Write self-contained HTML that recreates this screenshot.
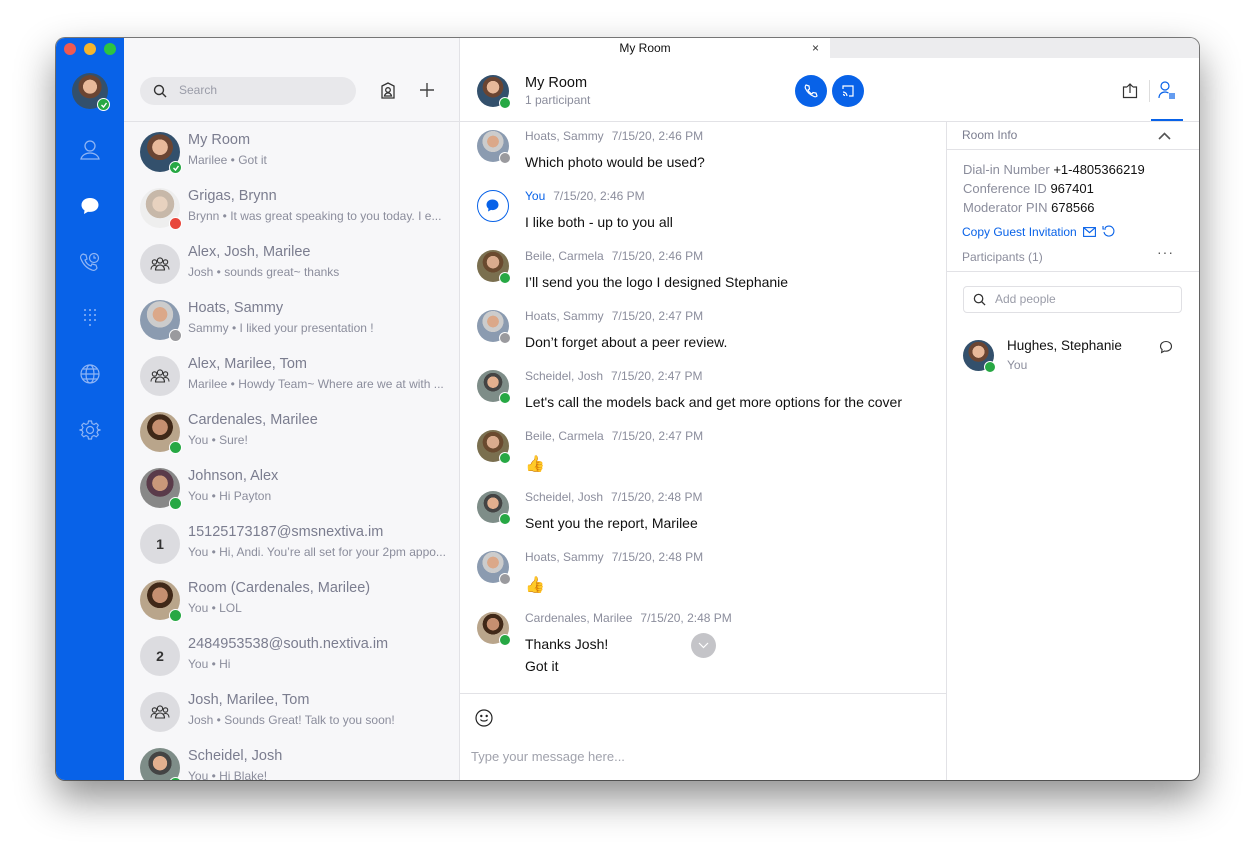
<!DOCTYPE html>
<html><head><meta charset="utf-8"><style>
*{box-sizing:border-box;margin:0;padding:0}
body{width:1255px;height:855px;background:#fff;font-family:"Liberation Sans",sans-serif;position:relative;overflow:hidden}
.win{position:absolute;left:56px;top:38px;width:1143px;height:742px;border-radius:9px;overflow:hidden;background:#fff;box-shadow:0 18px 40px rgba(0,0,0,.45),0 0 0 1px rgba(0,0,0,.5)}
.abs{position:absolute}
.side{left:0;top:0;width:68px;height:742px;background:#0862e8}
.dot{width:12px;height:12px;border-radius:50%;top:5px}
.list{left:68px;top:0;width:336px;height:742px;background:#f7f7f9;border-right:1px solid #e2e2e6}
.av{position:absolute;border-radius:50%}
.st{position:absolute;width:13px;height:13px;border-radius:50%;background:#27a844;border:1.5px solid #fff;right:-2px;bottom:-2px}
.st.g{background:#9a9a9e}.st.r{background:#e8473c}
.st svg{position:absolute;left:1.5px;top:1.5px}
.row{position:absolute;left:0;width:336px;height:56px}
.row .av{left:16px;top:10px;width:40px;height:40px}
.row .n{position:absolute;left:64px;top:10px;font-size:14.5px;color:#7b7d8f}
.row .p{position:absolute;left:64px;top:31px;font-size:12px;color:#8b8d9c;white-space:nowrap}
.grp{background:#dcdce0;display:flex;align-items:center;justify-content:center;font-size:14px;color:#333;font-weight:bold}
.chat{left:404px;top:0;width:486px;height:742px}
.msg{position:absolute;left:0;width:486px}
.msg .av{left:17px;top:0;width:32px;height:32px}
.msg .st{width:12px;height:12px}
.msg .h{position:absolute;left:65px;top:-1px;font-size:12px;color:#8b8d9c;white-space:nowrap}
.msg .h b{font-weight:normal;margin-left:8px}
.msg .t{position:absolute;left:65px;top:24px;font-size:14px;color:#111;white-space:nowrap}
.right{left:890px;top:20px;width:253px;height:722px}
.ph1{background:radial-gradient(circle at 50% 38%,#e8b99a 0 24%,#6b4532 25% 40%,#33506c 41%)}
.ph2{background:radial-gradient(circle at 50% 36%,#dba889 0 22%,#ccc 23% 40%,#8b9bb0 41%)}
.ph3{background:radial-gradient(circle at 50% 38%,#c68f70 0 24%,#402818 25% 40%,#b9a58b 41%)}
.ph4{background:radial-gradient(circle at 50% 38%,#e3b08f 0 22%,#444 23% 36%,#7e8d88 37%)}
.ph5{background:radial-gradient(circle at 50% 38%,#d9ab8d 0 24%,#6a4a2f 25% 40%,#7a6f4f 41%)}
.ph6{background:radial-gradient(circle at 50% 40%,#e8d2bf 0 24%,#c7b8a9 25% 45%,#eee 46%)}
.ph7{background:radial-gradient(circle at 50% 38%,#c9987a 0 24%,#5a3b4a 25% 42%,#888 43%)}
</style></head><body>
<svg width="0" height="0" style="position:absolute"><symbol id="gp" viewBox="0 0 20 16"><g fill="none" stroke="#333" stroke-width="1.1"><circle cx="10" cy="4.5" r="2.6"/><circle cx="4.5" cy="6" r="2.2"/><circle cx="15.5" cy="6" r="2.2"/><path d="M5.5 14c0-3 2-5 4.5-5s4.5 2 4.5 5z"/><path d="M1 13.5c0-2.5 1.5-4 3.5-4 1 0 1.6.3 2 .7M19 13.5c0-2.5-1.5-4-3.5-4-1 0-1.6.3-2 .7"/></g></symbol></svg>
<div class="win">
 <div class="abs side">
  <div class="abs dot" style="left:8px;background:#ee5a52"></div>
  <div class="abs dot" style="left:28px;background:#f5b52e"></div>
  <div class="abs dot" style="left:48px;background:#2dc441"></div>
  <div class="av ph1" style="left:16px;top:35px;width:36px;height:36px"><div class="st"><svg width="8" height="8" viewBox="0 0 8 8"><path d="M1.5 4l2 2 3-4" stroke="#fff" stroke-width="1.4" fill="none"/></svg></div></div>
  <svg class="abs" style="left:23px;top:101px" width="22" height="22" viewBox="0 0 22 22" fill="none" stroke="#8fb5f5" stroke-width="1.3"><circle cx="11" cy="7" r="5"/><path d="M2 20c1-4 5-6 9-6s8 2 9 6z"/></svg>
  <svg class="abs" style="left:24px;top:158px" width="20" height="20" viewBox="0 0 20 20"><path d="M10 2C5 2 1.5 5 1.5 9c0 2.3 1.2 4.2 3 5.4L4 18l4-2.3c.6.1 1.3.2 2 .2 5 0 8.5-3 8.5-7S15 2 10 2z" fill="#fff"/></svg>
  <svg class="abs" style="left:23px;top:213px" width="22" height="22" viewBox="0 0 22 22" fill="none" stroke="#8fb5f5" stroke-width="1.2"><path d="M4 3l3 1 1 4-2 1c1 3 3 5 6 6l1-2 4 1 1 3c-1 2-3 3-5 2C7 17 4 13 2 8 1 6 2 4 4 3z"/><circle cx="15" cy="7" r="4.5"/><path d="M15 4.5V7h2"/></svg>
  <svg class="abs" style="left:26px;top:270px" width="16" height="18" viewBox="0 0 16 18" fill="#8fb5f5"><circle cx="3" cy="2" r="1"/><circle cx="8" cy="2" r="1"/><circle cx="13" cy="2" r="1"/><circle cx="3" cy="7" r="1"/><circle cx="8" cy="7" r="1"/><circle cx="13" cy="7" r="1"/><circle cx="3" cy="12" r="1"/><circle cx="8" cy="12" r="1"/><circle cx="13" cy="12" r="1"/><circle cx="8" cy="17" r="1"/></svg>
  <svg class="abs" style="left:23px;top:325px" width="22" height="22" viewBox="0 0 22 22" fill="none" stroke="#8fb5f5" stroke-width="1.2"><circle cx="11" cy="11" r="9"/><ellipse cx="11" cy="11" rx="4" ry="9"/><path d="M2 11h18M4 6h14M4 16h14"/></svg>
  <svg class="abs" style="left:23px;top:381px" width="22" height="22" viewBox="0 0 22 22" fill="none" stroke="#8fb5f5" stroke-width="1.2"><circle cx="11" cy="11" r="3.5"/><path d="M9.5 2h3l.5 2.5 2 1 2.3-1.3 2 2-1.3 2.3 1 2L21.5 11v0l-2.5.5-1 2 1.3 2.3-2 2-2.3-1.3-2 1L12.5 20h-3l-.5-2.5-2-1-2.3 1.3-2-2L4 13.5l-1-2L.5 11v0L3 10.5l1-2L2.7 6.2l2-2L7 5.5l2-1z"/></svg>
 </div>
 <div class="abs list">
  <div class="abs" style="left:16px;top:39px;width:216px;height:28px;border-radius:14px;background:#e8e8eb"></div>
  <svg class="abs" style="left:29px;top:46px" width="14" height="14" viewBox="0 0 14 14" fill="none" stroke="#333" stroke-width="1.4"><circle cx="6" cy="6" r="4.5"/><path d="M9.3 9.3L13 13"/></svg>
  <div class="abs" style="left:55px;top:45px;font-size:12px;color:#9a9ca8">Search</div>
  <svg class="abs" style="left:256px;top:44px" width="16" height="18" viewBox="0 0 16 18" fill="none" stroke="#333" stroke-width="1.3"><path d="M2 4l6-3 6 3v12H2z"/><circle cx="8" cy="8" r="2.3"/><path d="M4.5 14c.5-2 2-3 3.5-3s3 1 3.5 3z"/></svg>
  <svg class="abs" style="left:296px;top:45px" width="14" height="14" viewBox="0 0 14 14" stroke="#444" stroke-width="1.4"><path d="M7 0v14M0 7h14"/></svg>
  <div class="abs" style="left:0;top:83px;width:336px;height:1px;background:#e2e2e6"></div>

  <div class="row" style="top:84px"><div class="av ph1"><div class="st"><svg width="8" height="8" viewBox="0 0 8 8"><path d="M1.5 4l2 2 3-4" stroke="#fff" stroke-width="1.4" fill="none"/></svg></div></div><div class="n">My Room</div><div class="p">Marilee • Got it</div></div>
  <div class="row" style="top:140px"><div class="av ph6"><div class="st r"></div></div><div class="n">Grigas, Brynn</div><div class="p">Brynn • It was great speaking to you today. I e...</div></div>
  <div class="row" style="top:196px"><div class="av grp"><svg width="20" height="16"><use href="#gp"/></svg></div><div class="n">Alex, Josh, Marilee</div><div class="p">Josh • sounds great~ thanks</div></div>
  <div class="row" style="top:252px"><div class="av ph2"><div class="st g"></div></div><div class="n">Hoats, Sammy</div><div class="p">Sammy • I liked your presentation !</div></div>
  <div class="row" style="top:308px"><div class="av grp"><svg width="20" height="16"><use href="#gp"/></svg></div><div class="n">Alex, Marilee, Tom</div><div class="p">Marilee • Howdy Team~ Where are we at with ...</div></div>
  <div class="row" style="top:364px"><div class="av ph3"><div class="st"></div></div><div class="n">Cardenales, Marilee</div><div class="p">You • Sure!</div></div>
  <div class="row" style="top:420px"><div class="av ph7"><div class="st"></div></div><div class="n">Johnson, Alex</div><div class="p">You • Hi Payton</div></div>
  <div class="row" style="top:476px"><div class="av grp">1</div><div class="n">15125173187@smsnextiva.im</div><div class="p">You • Hi, Andi. You’re all set for your 2pm appo...</div></div>
  <div class="row" style="top:532px"><div class="av ph3"><div class="st"></div></div><div class="n">Room (Cardenales, Marilee)</div><div class="p">You • LOL</div></div>
  <div class="row" style="top:588px"><div class="av grp">2</div><div class="n">2484953538@south.nextiva.im</div><div class="p">You • Hi</div></div>
  <div class="row" style="top:644px"><div class="av grp"><svg width="20" height="16"><use href="#gp"/></svg></div><div class="n">Josh, Marilee, Tom</div><div class="p">Josh • Sounds Great! Talk to you soon!</div></div>
  <div class="row" style="top:700px"><div class="av ph4"><div class="st"></div></div><div class="n">Scheidel, Josh</div><div class="p">You • Hi Blake!</div></div>
 </div>
 <div class="abs chat">
  <div class="abs" style="left:0;top:0;width:370px;height:20px;background:#fff;text-align:center;font-size:12px;line-height:20px;color:#111">My Room</div>
  <div class="abs" style="left:352px;top:3px;font-size:12px;color:#333">×</div>
  <div class="abs" style="left:370px;top:0;width:400px;height:20px;background:#ececee"></div>
  <div class="av ph1" style="left:17px;top:37px;width:32px;height:32px"><div class="st" style="width:12px;height:12px"></div></div>
  <div class="abs" style="left:65px;top:37px;font-size:14.5px;color:#111">My Room</div>
  <div class="abs" style="left:65px;top:55px;font-size:12px;color:#8b8d9c">1 participant</div>
  <div class="av" style="left:335px;top:37px;width:32px;height:32px;background:#0862e8"><svg style="position:absolute;left:9px;top:9px" width="14" height="14" viewBox="0 0 14 14" fill="none" stroke="#fff" stroke-width="1.2"><path d="M2 1l3 1 .5 3-1.5 1c.8 1.8 2 3 4 4l1-1.5 3 .5 1 3c-1 1-2 1-3 .5C5.5 10.5 3.5 8.5 1.5 4.5 1 3 1 2 2 1z"/></svg></div>
  <div class="av" style="left:372px;top:37px;width:32px;height:32px;background:#0862e8"><svg style="position:absolute;left:9px;top:9px" width="14" height="14" viewBox="0 0 14 14" fill="none" stroke="#fff" stroke-width="1.2"><path d="M2 5V2h10v10H8"/><path d="M2 8a4 4 0 014 4M2 10.5a1.5 1.5 0 011.5 1.5"/></svg></div>
  <div class="abs" style="left:0;top:83px;width:486px;height:1px;background:#e2e2e6"></div>

  <div class="msg" style="top:92px"><div class="av ph2"><div class="st g"></div></div><div class="h">Hoats, Sammy<b>7/15/20, 2:46 PM</b></div><div class="t">Which photo would be used?</div></div>
  <div class="msg" style="top:152px"><div class="av" style="border:1.5px solid #0862e8;background:#fff"><svg style="position:absolute;left:7px;top:7px" width="15" height="15" viewBox="0 0 15 15"><path d="M7.5 1.5c-3.5 0-6 2.3-6 5.3 0 1.6.8 3 2 3.9L3 13.5l3-1.6c.5.1 1 .2 1.5.2 3.5 0 6-2.3 6-5.3s-2.5-5.3-6-5.3z" fill="#0862e8"/></svg></div><div class="h" style="color:#0862e8">You<b style="color:#8b8d9c">7/15/20, 2:46 PM</b></div><div class="t">I like both - up to you all</div></div>
  <div class="msg" style="top:212px"><div class="av ph5"><div class="st"></div></div><div class="h">Beile, Carmela<b>7/15/20, 2:46 PM</b></div><div class="t">I’ll send you the logo I designed Stephanie</div></div>
  <div class="msg" style="top:272px"><div class="av ph2"><div class="st g"></div></div><div class="h">Hoats, Sammy<b>7/15/20, 2:47 PM</b></div><div class="t">Don’t forget about a peer review.</div></div>
  <div class="msg" style="top:332px"><div class="av ph4"><div class="st"></div></div><div class="h">Scheidel, Josh<b>7/15/20, 2:47 PM</b></div><div class="t">Let's call the models back and get more options for the cover</div></div>
  <div class="msg" style="top:392px"><div class="av ph5"><div class="st"></div></div><div class="h">Beile, Carmela<b>7/15/20, 2:47 PM</b></div><div class="t" style="color:#f3d3b5;font-size:16px">👍</div></div>
  <div class="msg" style="top:453px"><div class="av ph4"><div class="st"></div></div><div class="h">Scheidel, Josh<b>7/15/20, 2:48 PM</b></div><div class="t">Sent you the report, Marilee</div></div>
  <div class="msg" style="top:513px"><div class="av ph2"><div class="st g"></div></div><div class="h">Hoats, Sammy<b>7/15/20, 2:48 PM</b></div><div class="t" style="color:#f5b52e;font-size:16px">👍</div></div>
  <div class="msg" style="top:574px"><div class="av ph3"><div class="st"></div></div><div class="h">Cardenales, Marilee<b>7/15/20, 2:48 PM</b></div><div class="t">Thanks Josh!</div><div class="t" style="top:46px">Got it</div></div>
  <div class="av" style="left:231px;top:595px;width:25px;height:25px;background:#c4c4c8"><svg style="position:absolute;left:7px;top:9px" width="11" height="7" viewBox="0 0 11 7" fill="none" stroke="#fff" stroke-width="1.2"><path d="M1 1l4.5 4.5L10 1"/></svg></div>

  <div class="abs" style="left:0;top:655px;width:486px;height:1px;background:#e2e2e6"></div>
  <svg class="abs" style="left:15px;top:671px" width="18" height="18" viewBox="0 0 18 18" fill="none" stroke="#222" stroke-width="1.2"><circle cx="9" cy="9" r="8"/><circle cx="6.3" cy="7" r=".6" fill="#222"/><circle cx="11.7" cy="7" r=".6" fill="#222"/><path d="M5.5 10.5c1 2 6 2 7 0"/></svg>
  <div class="abs" style="left:11px;top:711px;font-size:13px;color:#a0a2ac">Type your message here...</div>
 </div>
 <div class="abs right">
  <div class="abs" style="left:0;top:63px;width:1px;height:660px;background:#e2e2e6"></div>
  <div class="abs" style="left:0;top:63px;width:253px;height:1px;background:#e2e2e6"></div>
  <svg class="abs" style="left:176px;top:25px" width="16" height="16" viewBox="0 0 16 16" fill="none" stroke="#333" stroke-width="1.2"><path d="M5 4H1.5v10.5h13V4H11M8 10V1M5 4l3-3 3 3"/></svg>
  <div class="abs" style="left:203px;top:22px;width:1px;height:22px;background:#ddd"></div>
  <svg class="abs" style="left:212px;top:23px" width="18" height="18" viewBox="0 0 18 18" fill="none" stroke="#0862e8" stroke-width="1.2"><circle cx="7" cy="5" r="4"/><path d="M1 17c0-4 3-6 6-6 1.5 0 2.5.4 3.5 1M11 13h6M11 15h6M11 17h6"/></svg>
  <div class="abs" style="left:205px;top:61px;width:32px;height:2px;background:#0862e8"></div>
  <div class="abs" style="left:16px;top:70px;font-size:12px;color:#7b7d8f">Room Info</div>
  <svg class="abs" style="left:212px;top:74px" width="13" height="8" viewBox="0 0 13 8" fill="none" stroke="#555" stroke-width="1.6"><path d="M1 7l5.5-5.5L12 7"/></svg>
  <div class="abs" style="left:0;top:91px;width:253px;height:1px;background:#e2e2e6"></div>
  <div class="abs" style="left:17px;top:102px;font-size:13px;color:#8b8d9c;line-height:19px">Dial-in Number <span style="color:#111">+1-4805366219</span><br>Conference ID <span style="color:#111">967401</span><br>Moderator PIN <span style="color:#111">678566</span></div>
  <div class="abs" style="left:16px;top:167px;font-size:12px;color:#0862e8">Copy Guest Invitation</div>
  <svg class="abs" style="left:137px;top:169px" width="13" height="10" viewBox="0 0 13 10" fill="none" stroke="#0862e8" stroke-width="1.1"><rect x=".6" y=".6" width="11.8" height="8.8"/><path d="M.6.6l5.9 5 5.9-5"/></svg>
  <svg class="abs" style="left:156px;top:167px" width="13" height="13" viewBox="0 0 13 13" fill="none" stroke="#0862e8" stroke-width="1.1"><path d="M3 3a5 5 0 11-1 4"/><path d="M1 1v3h3"/></svg>
  <div class="abs" style="left:16px;top:192px;font-size:12px;color:#8b8d9c">Participants (1)</div>
  <div class="abs" style="left:211px;top:186px;font-size:14px;color:#555;letter-spacing:1px">···</div>
  <div class="abs" style="left:0;top:213px;width:253px;height:1px;background:#e2e2e6"></div>
  <div class="abs" style="left:17px;top:228px;width:219px;height:27px;border:1px solid #e0e0e4;border-radius:4px;background:#fff"></div>
  <svg class="abs" style="left:27px;top:235px" width="13" height="13" viewBox="0 0 14 14" fill="none" stroke="#333" stroke-width="1.4"><circle cx="6" cy="6" r="4.5"/><path d="M9.3 9.3L13 13"/></svg>
  <div class="abs" style="left:49px;top:234px;font-size:12px;color:#9a9ca8">Add people</div>
  <div class="av ph1" style="left:17px;top:282px;width:31px;height:31px"><div class="st" style="width:12px;height:12px"></div></div>
  <div class="abs" style="left:61px;top:280px;font-size:13.5px;color:#111">Hughes, Stephanie</div>
  <div class="abs" style="left:61px;top:300px;font-size:12px;color:#8b8d9c">You</div>
  <svg class="abs" style="left:213px;top:282px" width="14" height="14" viewBox="0 0 14 14" fill="none" stroke="#333" stroke-width="1.1"><path d="M7 1.5c-3 0-5.5 2-5.5 4.8 0 1.3.6 2.5 1.6 3.3L2.6 12.5l2.8-1.5c.5.2 1 .2 1.6.2 3 0 5.5-2 5.5-4.9S10 1.5 7 1.5z"/></svg>
 </div>
</div>
</body></html>
